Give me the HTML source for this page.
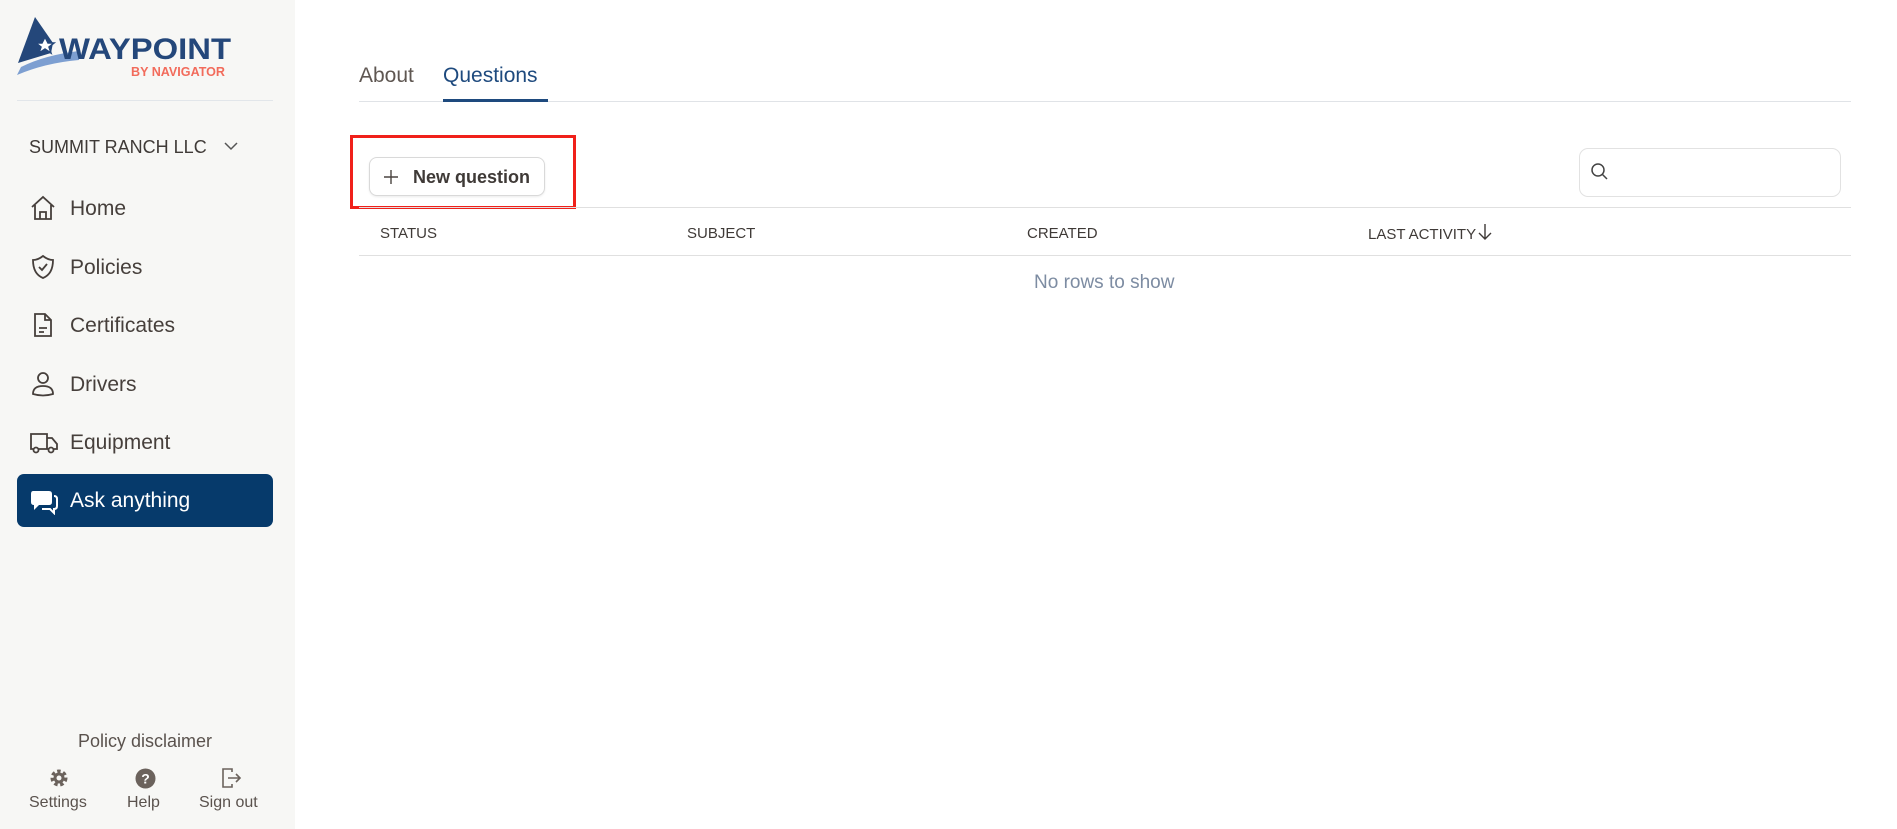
<!DOCTYPE html>
<html><head><meta charset="utf-8"><style>
*{margin:0;padding:0;box-sizing:border-box}
body{width:1897px;height:829px;overflow:hidden;background:#fff;font-family:"Liberation Sans",sans-serif;color:#4a4440;position:relative}
.sb{position:absolute;left:0;top:0;width:295px;height:829px;background:#f7f7f5}
.a{position:absolute;white-space:nowrap}
.nav{position:absolute;left:17px;width:256px;height:52px;display:flex;align-items:center;font-size:21px;color:#463f3b}
.nav svg{position:absolute;left:12px}
.nav span{position:absolute;left:53px;top:15px}
.th{position:absolute;top:225px;font-size:15px;color:#3f3a37}
</style></head><body>
<div class="sb">
 <svg class="a" style="left:15px;top:15px" width="220" height="66" viewBox="0 0 220 66">
  <path d="M20 2 L3 48 L36 38 L38 28 Z" fill="#24477a"/>
  <path d="M2 60 Q30 48 64 45 L64 36 Q30 40 6 52 Z" fill="#7d9fd1"/>
  <path d="M30 22 l3 6 6 0 -5 4 2 6 -6 -4 -6 4 2 -6 -5 -4 6 0z" fill="#fff" stroke="#24477a" stroke-width="1.5"/>
  <text x="44" y="44" font-family="Liberation Sans" font-weight="bold" font-size="30" fill="#24477a" textLength="172" lengthAdjust="spacingAndGlyphs">WAYPOINT</text>
  <text x="116" y="61" font-family="Liberation Sans" font-weight="bold" font-size="13" fill="#f26b5b" textLength="94" lengthAdjust="spacingAndGlyphs">BY NAVIGATOR</text>
 </svg>
 <div class="a" style="left:17px;top:100px;width:256px;height:1px;background:#e2e6ea"></div>
 <div class="a" style="left:29px;top:137px;font-size:18px;color:#3f3a37">SUMMIT RANCH LLC</div>
 <svg class="a" style="left:224px;top:141px" width="14" height="10"><path d="M1 2 L7 8 L13 2" fill="none" stroke="#555" stroke-width="1.5"/></svg>
 <div class="nav" style="top:182px"><svg width="28" height="28" viewBox="0 0 28 28" fill="none" stroke="#463f3b" stroke-width="1.8"><path d="M3 13 L14 3 L25 13 M6 11 V25 H22 V11 M11 25 V18 H17 V25"/></svg><span>Home</span></div>
 <div class="nav" style="top:241px"><svg width="28" height="28" viewBox="0 0 28 28" fill="none" stroke="#463f3b" stroke-width="1.8"><path d="M14 3 Q9 7 4 7 Q4 21 14 25 Q24 21 24 7 Q19 7 14 3Z M10 14 L13 17 L18 11"/></svg><span>Policies</span></div>
 <div class="nav" style="top:299px"><svg width="28" height="28" viewBox="0 0 28 28" fill="none" stroke="#463f3b" stroke-width="1.8"><path d="M6 3 H16 L22 9 V25 H6 Z M16 3 V9 H22 M10 17 H18 M10 21 H15"/></svg><span>Certificates</span></div>
 <div class="nav" style="top:358px"><svg width="28" height="28" viewBox="0 0 28 28" fill="none" stroke="#463f3b" stroke-width="1.8"><circle cx="14" cy="8" r="5"/><path d="M4 24 Q4 16 14 16 Q24 16 24 24 Q14 27 4 24Z"/></svg><span>Drivers</span></div>
 <div class="nav" style="top:416px"><svg width="30" height="28" viewBox="0 0 30 28" fill="none" stroke="#463f3b" stroke-width="1.8"><path d="M2 6 H18 V21 H2 Z M18 10 H23 L28 16 V21 H18"/><circle cx="7" cy="22" r="2.5" fill="#f7f7f5"/><circle cx="22" cy="22" r="2.5" fill="#f7f7f5"/></svg><span>Equipment</span></div>
 <div class="nav" style="top:474px;height:53px;background:#063a6b;border-radius:7px;color:#fff"><svg width="30" height="28" viewBox="0 0 30 28"><path d="M4 4 H20 Q23 4 23 7 V15 Q23 18 20 18 H10 L5 23 V18 Q2 18 2 15 V7 Q2 4 4 4Z" fill="#fff"/><path d="M25 9 Q28 9 28 12 V19 Q28 22 25 22 V26 L21 22 H13" fill="none" stroke="#fff" stroke-width="2"/></svg><span style="color:#fff">Ask anything</span></div>
 <div class="a" style="left:0;width:290px;top:731px;text-align:center;font-size:18px;color:#5a524d">Policy disclaimer</div>
 <svg class="a" style="left:49px;top:768px" width="20" height="20" viewBox="0 0 20 20"><circle cx="10" cy="10" r="6" fill="none" stroke="#6b625c" stroke-width="5" stroke-dasharray="3 2.3"/><circle cx="10" cy="10" r="5.5" fill="#6b625c"/><circle cx="10" cy="10" r="2.5" fill="#f7f7f5"/></svg>
 <svg class="a" style="left:135px;top:768px" width="21" height="21" viewBox="0 0 21 21"><circle cx="10.5" cy="10.5" r="10" fill="#6b625c"/><text x="10.5" y="15.5" text-anchor="middle" font-family="Liberation Sans" font-weight="bold" font-size="14" fill="#fff">?</text></svg>
 <svg class="a" style="left:220px;top:767px" width="22" height="22" viewBox="0 0 22 22" fill="none" stroke="#6b625c" stroke-width="1.6"><path d="M12 5 V2 H3 V20 H12 V17 M8 11 H20 M16 7 L20 11 L16 15"/></svg>
 <div class="a" style="left:29px;top:794px;font-size:16px;color:#5a524d">Settings</div>
 <div class="a" style="left:127px;top:794px;font-size:16px;color:#5a524d">Help</div>
 <div class="a" style="left:199px;top:794px;font-size:16px;color:#5a524d">Sign out</div>
</div>
<div class="a" style="left:359px;top:64px;font-size:21px;color:#5f5752">About</div>
<div class="a" style="left:443px;top:64px;font-size:21px;color:#1e4a7e">Questions</div>
<div class="a" style="left:359px;top:101px;width:1492px;height:1px;background:#e0e3e7"></div>
<div class="a" style="left:443px;top:99px;width:105px;height:3px;background:#1e4a7e"></div>
<div class="a" style="left:350px;top:135px;width:226px;height:74px;border:3px solid #f0201a"></div>
<div class="a" style="left:369px;top:157px;width:176px;height:39px;border:1px solid #d9d9d9;border-radius:8px;background:#fff;box-shadow:0 1px 2px rgba(0,0,0,.08)"></div>
<svg class="a" style="left:383px;top:169px" width="16" height="16"><path d="M8 1 V15 M1 8 H15" stroke="#4a4440" stroke-width="1.4"/></svg>
<div class="a" style="left:413px;top:167px;font-size:18px;font-weight:bold;color:#3f3a37">New question</div>
<div class="a" style="left:1579px;top:148px;width:262px;height:49px;border:1px solid #e2e2e2;border-radius:9px"></div>
<svg class="a" style="left:1590px;top:162px" width="20" height="20" fill="none" stroke="#444" stroke-width="1.5"><circle cx="8" cy="8" r="6"/><path d="M12.5 12.5 L17 17"/></svg>
<div class="a" style="left:359px;top:207px;width:1492px;height:1px;background:#e0e0e0"></div>
<div class="a" style="left:359px;top:255px;width:1492px;height:1px;background:#e0e0e0"></div>
<div class="th" style="left:380px">STATUS</div>
<div class="th" style="left:687px">SUBJECT</div>
<div class="th" style="left:1027px">CREATED</div>
<div class="th" style="left:1368px;top:223px">LAST ACTIVITY<svg width="18" height="18" style="vertical-align:-2px"><path d="M9 1 V16 M3 10 L9 16 L15 10" fill="none" stroke="#3f3a37" stroke-width="1.4"/></svg></div>
<div class="a" style="left:1034px;top:272px;font-size:19px;color:#7d8ca2">No rows to show</div>
</body></html>
